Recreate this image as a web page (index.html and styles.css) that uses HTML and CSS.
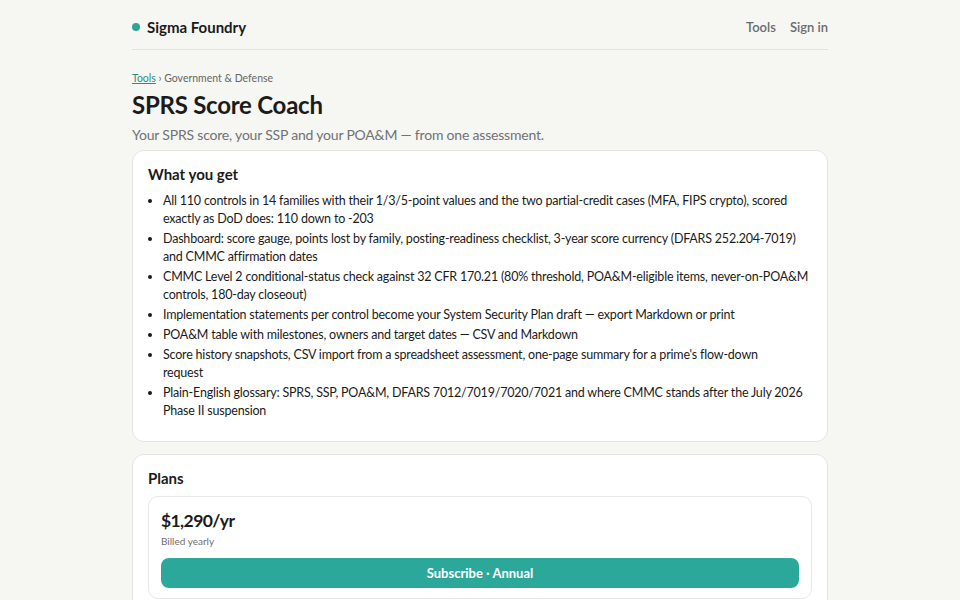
FILE: index.html
```html
<!DOCTYPE html>
<html lang="en">
<head>
  <meta charset="UTF-8">
  <meta name="viewport" content="width=device-width, initial-scale=1">
  <title>SPRS Score Coach — Sigma Foundry</title>
  <link rel="stylesheet" href="styles.css">
</head>
<body>
  <div class="page">
    <header class="topbar">
      <a class="brand" href="#"><span class="brand-dot"></span>Sigma Foundry</a>
      <nav class="nav">
        <a href="#">Tools</a>
        <a href="#">Sign in</a>
      </nav>
    </header>

    <div class="crumbs"><a href="#">Tools</a> › Government &amp; Defense</div>
    <h1 class="title">SPRS Score Coach</h1>
    <p class="lede">Your SPRS score, your SSP and your POA&amp;M — from one assessment.</p>

    <section class="card">
      <h2>What you get</h2>
      <ul class="features">
        <li>All 110 controls in 14 families with their 1/3/5-point values and the two partial-credit cases (MFA, FIPS crypto), scored exactly as DoD does: 110 down to -203</li>
        <li>Dashboard: score gauge, points lost by family, posting-readiness checklist, 3-year score currency (DFARS 252.204-7019) and CMMC affirmation dates</li>
        <li>CMMC Level 2 conditional-status check against 32 CFR 170.21 (80% threshold, POA&amp;M-eligible items, never-on-POA&amp;M controls, 180-day closeout)</li>
        <li>Implementation statements per control become your System Security Plan draft — export Markdown or print</li>
        <li>POA&amp;M table with milestones, owners and target dates — CSV and Markdown</li>
        <li>Score history snapshots, CSV import from a spreadsheet assessment, one-page summary for a prime's flow-down<br>request</li>
        <li>Plain-English glossary: SPRS, SSP, POA&amp;M, DFARS 7012/7019/7020/7021 and where CMMC stands after the July 2026 Phase II suspension</li>
      </ul>
    </section>

    <section class="card">
      <h2>Plans</h2>
      <div class="plan">
        <div class="price">$1,290/yr</div>
        <div class="billing">Billed yearly</div>
        <button class="subscribe">Subscribe · Annual</button>
      </div>
    </section>
  </div>
</body>
</html>
```

FILE: styles.css
```css
/* Base */
body {
  margin: 0;
  background: #f6f6f3;
  color: #1b1b1b;
  font-family: Lato, "Noto Sans", sans-serif;
  font-size: 13px;
}
*, *:before, *:after {
  box-sizing: border-box;
}
a {
  color: inherit;
  text-decoration: none;
}
.page {
  width: 696px;
  margin: 0 auto;
}

/* Top bar */
.topbar {
  display: flex;
  align-items: center;
  justify-content: space-between;
  height: 50px;
  border-bottom: 1px solid #e2e2de;
  padding-top: 4px;
}
.brand {
  display: flex;
  align-items: center;
  gap: 7px;
  font-weight: 700;
  font-size: 15px;
}
.brand-dot {
  width: 8px;
  height: 8px;
  border-radius: 50%;
  background: #2aa596;
}
.nav {
  display: flex;
  gap: 14px;
  color: #686c70;
  font-size: 13px;
  font-weight: 600;
}

/* Heading block */
.crumbs {
  margin-top: 22px;
  font-size: 10.5px;
  color: #666;
}
.crumbs a {
  color: #2a8c82;
  text-decoration: underline;
}
.title {
  margin: 6px 0 0;
  font-size: 24px;
  font-weight: 700;
  letter-spacing: -0.25px;
}
.lede {
  margin: 7px 0 7px;
  font-size: 14px;
  letter-spacing: -0.2px;
  color: #707274;
}

/* Cards */
.card {
  background: #fff;
  border: 1px solid #e4e4df;
  border-radius: 12px;
  padding: 14px 15px 19px;
  margin-bottom: 12px;
}
.card h2 {
  margin: 0 0 9px;
  font-size: 15px;
  font-weight: 700;
}
.features {
  margin: 0;
  padding-left: 15px;
  line-height: 18px;
  font-size: 12.5px;
  letter-spacing: -0.2px;
}
.features li {
  margin-bottom: 2px;
}

/* Plan */
.plan {
  border: 1px solid #e8e8e4;
  border-radius: 10px;
  padding: 13px 12px 10px;
}
.price {
  font-size: 17.5px;
  font-weight: 700;
  letter-spacing: -0.6px;
}
.billing {
  margin-top: 4px;
  font-size: 10px;
  color: #6e6e6e;
}
.subscribe {
  display: block;
  width: 100%;
  margin-top: 11px;
  height: 30px;
  border: 0;
  border-radius: 8px;
  background: #2ca89b;
  color: #fff;
  font-family: inherit;
  font-size: 13px;
  font-weight: 700;
}
```
